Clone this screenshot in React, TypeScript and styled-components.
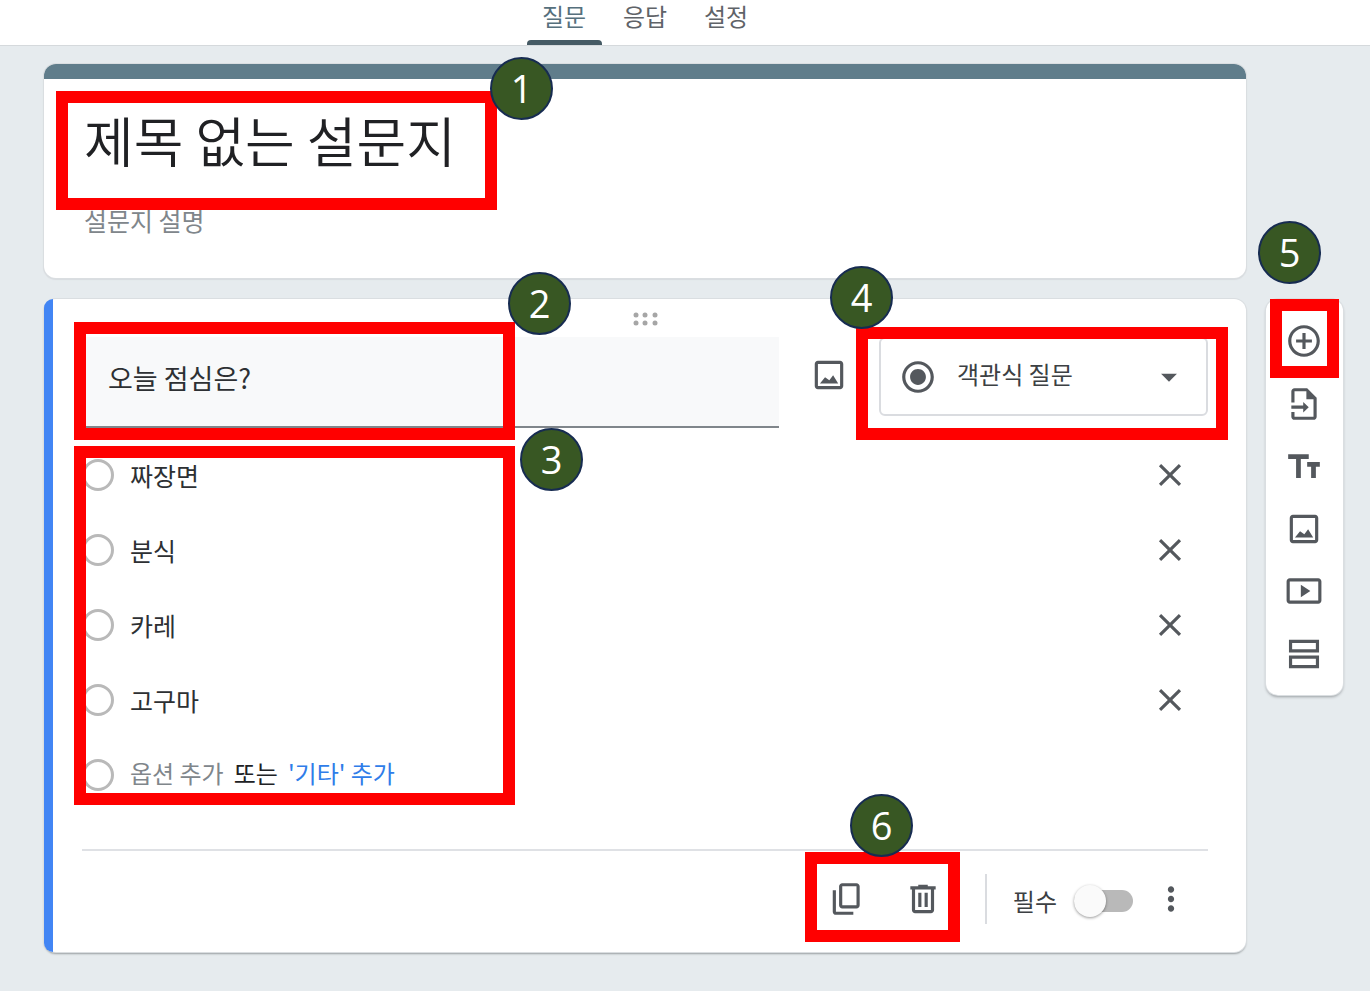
import React from "react";
import styled, { createGlobalStyle } from "styled-components";

const GlobalStyle = createGlobalStyle`
  *, *::before, *::after { box-sizing: border-box; }
  body {
    margin: 0;
    background: #e6ebee;
    color: #202124;
    font-family: "Noto Sans CJK KR", "Noto Sans", sans-serif;
    font-size: 24px;
    line-height: 32px;
  }
  button, input, select { font: inherit; color: inherit; }
`;

const Page = styled.div`
  min-height: 100vh;
  background: #e6ebee;
`;

const Header = styled.header`
  display: flex;
  justify-content: center;
  padding: 0 124px 0 44px;
  background: #fff;
  border-bottom: 1px solid #d5d9dc;
`;

const Tabs = styled.nav`
  display: flex;
  gap: 6px;
`;

const Tab = styled.button<{ $active?: boolean }>`
  display: flex;
  flex-direction: column;
  justify-content: space-between;
  width: 75px;
  height: 45px;
  padding: 0;
  border: 0;
  background: none;
  color: ${(p) => (p.$active ? "#56707d" : "#5f6368")};
  text-align: center;
  span { width: 100%; }
  &::after {
    content: "";
    width: 100%;
    height: 5px;
    border-radius: 4px 4px 0 0;
    background: ${(p) => (p.$active ? "#455a64" : "transparent")};
  }
`;

const Board = styled.main`
  display: grid;
  grid-template-columns: minmax(0, 1fr) 77px;
  column-gap: 20px;
  row-gap: 21px;
  align-items: start;
  padding: 18px 27px 36px 44px;
`;

const TitleCard = styled.section`
  position: relative;
  grid-column: 1;
  border-radius: 12px;
  background: #fff;
  box-shadow: 0 0 0 1px #dadee1, 0 1px 1px 1px #d8dcdf;
`;

const TopBar = styled.div`
  height: 15px;
  border-radius: 12px 12px 0 0;
  background: #607d8b;
`;

const TitleBody = styled.div`
  display: flex;
  flex-direction: column;
  gap: 24px;
  padding: 21px 40px 42px;
`;

const PlainInput = styled.input<{ $size: number }>`
  flex: 1;
  width: 100%;
  min-width: 0;
  padding: 0;
  border: 0;
  outline: 0;
  background: transparent;
  font-size: ${(p) => p.$size}px;
  font-weight: ${(p) => (p.$size > 40 ? 350 : 400)};
  line-height: ${(p) => (p.$size > 40 ? 80 : 32)}px;
  color: ${(p) => (p.$size > 40 ? "#202124" : "#2d3033")};
  &::placeholder { color: #80868b; opacity: 1; }
`;

const QuestionCard = styled.section`
  grid-column: 1;
  display: flex;
  border-radius: 12px;
  background: #fff;
  box-shadow: 0 0 0 1px #dadee1, 0 2px 2px 0 #9a9fa2;
`;

const Stripe = styled.div`
  width: 9px;
  border-radius: 12px 0 0 12px;
  background: #4285f4;
`;

const QuestionBody = styled.div`
  flex: 1;
  min-width: 0;
  padding: 13px 38px 0 29px;
`;

const Handle = styled.div`
  display: flex;
  justify-content: center;
  height: 25px;
  svg { display: block; }
`;

const QuestionRow = styled.div`
  position: relative;
  display: flex;
  align-items: flex-start;
`;

const QuestionField = styled.div`
  display: flex;
  align-items: center;
  flex: 1;
  height: 91px;
  padding: 0 26px 8px;
  background: #f8f9fa;
  border-bottom: 2px solid #80868b;
`;

const IconButton = styled.button<{ $w?: number; $h?: number }>`
  display: flex;
  align-items: center;
  justify-content: center;
  flex: none;
  width: ${(p) => p.$w || 76}px;
  height: ${(p) => p.$h || 76}px;
  padding: 0;
  border: 0;
  background: none;
  color: #54585d;
`;

const TypePicker = styled.label`
  display: flex;
  align-items: center;
  width: 329px;
  height: 79px;
  padding: 0 18px;
  border: 2px solid #dadce0;
  border-radius: 6px;
  color: #54585d;
`;

const TypeSelect = styled.select`
  flex: 1;
  margin-left: 20px;
  padding: 0 0 6px;
  border: 0;
  outline: 0;
  appearance: none;
  background: transparent;
  line-height: 36px;
  color: #3c4043;
`;

const Options = styled.ul`
  position: relative;
  margin: 9px 0 0;
  padding: 0;
  list-style: none;
`;

const OptionRow = styled.li`
  display: flex;
  align-items: center;
  height: 75px;
`;

const Radio = styled.input`
  flex: none;
  appearance: none;
  width: 32px;
  height: 32px;
  margin: 0 16px 0 0;
  border: 3px solid #b9b9b9;
  border-radius: 50%;
`;

const AddLine = styled.div`
  display: flex;
  gap: 10px;
  padding-bottom: 4px;
`;

const TextButton = styled.button<{ $tone: string }>`
  padding: 0;
  border: 0;
  background: none;
  color: ${(p) => p.$tone};
`;

const Footer = styled.footer`
  position: relative;
  display: flex;
  align-items: center;
  justify-content: flex-end;
  height: 103px;
  margin-top: 37px;
  padding-bottom: 6px;
  border-top: 2px solid #dfe1e5;
`;

const Separator = styled.span`
  width: 2px;
  height: 50px;
  margin: 0 26px 0 24px;
  background: #dadce0;
`;

const Required = styled.label`
  display: flex;
  align-items: center;
  gap: 17px;
  padding-top: 4px;
  color: #3c4043;
`;

const Switch = styled.input`
  appearance: none;
  display: flex;
  align-items: center;
  width: 59px;
  height: 22px;
  margin: 0;
  border-radius: 11px;
  background: #b9b9b9;
  &::before {
    content: "";
    width: 32px;
    height: 32px;
    border-radius: 50%;
    background: #fafafa;
    box-shadow: 0 1px 3px rgba(0, 0, 0, 0.4);
  }
`;

const SideBar = styled.aside`
  position: relative;
  grid-column: 2;
  display: grid;
  grid-auto-rows: 1fr;
  min-height: 396px;
  padding: 11px 0 10px;
  border-radius: 12px;
  background: #fff;
  box-shadow: 0 0 0 1px #dadee1, 0 2px 3px 0 #9a9fa2;
`;

const Frame = styled.div<{ $top: number; $left?: number; $right?: number; $w: number; $h: number }>`
  position: absolute;
  top: ${(p) => p.$top}px;
  ${(p) => (p.$right !== undefined ? `right: ${p.$right}px;` : `left: ${p.$left}px;`)}
  width: ${(p) => p.$w}px;
  height: ${(p) => p.$h}px;
  border: 12px solid #f00;
  pointer-events: none;
  z-index: 1;
`;

const Badge = styled.span<{ $x: number; $y: number }>`
  position: absolute;
  left: ${(p) => p.$x - 12}px;
  top: ${(p) => p.$y - 12}px;
  display: flex;
  align-items: center;
  justify-content: center;
  width: 63px;
  height: 63px;
  padding-bottom: 2px;
  border: 2px solid #172c51;
  border-radius: 50%;
  background: #385723;
  color: #fff;
  font-family: "Open Sans", "Noto Sans", sans-serif;
  font-size: 38px;
  z-index: 2;
`;

type MarkProps = {
  n: number;
  top: number;
  left?: number;
  right?: number;
  w: number;
  h: number;
  x: number;
  y: number;
};

const Mark = ({ n, top, left, right, w, h, x, y }: MarkProps) => (
  <Frame $top={top} $left={left} $right={right} $w={w} $h={h}>
    <Badge $x={x} $y={y}>{n}</Badge>
  </Frame>
);

const icons = {
  image:
    "M19 5v14H5V5h14m0-2H5c-1.1 0-2 .9-2 2v14c0 1.1.9 2 2 2h14c1.1 0 2-.9 2-2V5c0-1.1-.9-2-2-2zM14.6 12.2l-2.4 3.1-2.7-1.9-3.2 4h11.5z",
  radio:
    "M12 7c-2.76 0-5 2.24-5 5s2.24 5 5 5 5-2.24 5-5-2.24-5-5-5zm0-5C6.48 2 2 6.48 2 12s4.48 10 10 10 10-4.48 10-10S17.52 2 12 2zm0 18c-4.42 0-8-3.58-8-8s3.58-8 8-8 8 3.58 8 8-3.58 8-8 8z",
  arrow: "M7 10l5 5 5-5z",
  close:
    "M19 6.41L17.59 5 12 10.59 6.41 5 5 6.41 10.59 12 5 17.59 6.41 19 12 13.41 17.59 19 19 17.59 13.41 12z",
  copy:
    "M18 2H9c-1.1 0-2 .9-2 2v12c0 1.1.9 2 2 2h9c1.1 0 2-.9 2-2V4c0-1.1-.9-2-2-2zm0 14H9V4h9v12zM3 6.5h2V20h11v2H5c-1.1 0-2-.9-2-2z",
  trash:
    "M15 4V3H9v1H4v2h1v13c0 1.1.9 2 2 2h10c1.1 0 2-.9 2-2V6h1V4h-5zm2 15H7V6h10v13zM9 8h2v9H9zm4 0h2v9h-2z",
  more:
    "M12 8c1.1 0 2-.9 2-2s-.9-2-2-2-2 .9-2 2 .9 2 2 2zm0 2c-1.1 0-2 .9-2 2s.9 2 2 2 2-.9 2-2-.9-2-2-2zm0 6c-1.1 0-2 .9-2 2s.9 2 2 2 2-.9 2-2-.9-2-2-2z",
  add:
    "M13 7h-2v4H7v2h4v4h2v-4h4v-2h-4V7zm-1-5C6.48 2 2 6.48 2 12s4.48 10 10 10 10-4.48 10-10S17.52 2 12 2zm0 18c-4.41 0-8-3.59-8-8s3.59-8 8-8 8 3.59 8 8-3.59 8-8 8z",
  importDoc:
    "M14 2H6c-1.1 0-2 .9-2 2v7h2V4h7.5v5H18v11H6v-3H4v3c0 1.1.9 2 2 2h12c1.1 0 2-.9 2-2V8zM4 13h7.5v-2.3L15 14l-3.500 3.300V15H4z",
  text: "M2 4.500v3h5v12h3v-12h5v-3H2zm20 5h-8v3h2.500v7h3v-7H22v-3z",
  video:
    "M10 8v8l6-4-6-4zm11-4H3c-1.1 0-2 .9-2 2v12c0 1.1.9 2 2 2h18c1.1 0 2-.9 2-2V6c0-1.1-.9-2-2-2zm0 14H3V6h18v12z",
  section: "M2.500 3v8h19V3zm17 6h-15V5h15zM2.500 13v8h19v-8zm17 6h-15v-4h15z",
};

const Icon = ({ name, size = 38 }: { name: keyof typeof icons; size?: number }) => (
  <svg width={size} height={size} viewBox="0 0 24 24" fill="currentColor" aria-hidden="true">
    <path d={icons[name]} />
  </svg>
);

const tools: { name: keyof typeof icons; label: string }[] = [
  { name: "add", label: "질문 추가" },
  { name: "importDoc", label: "질문 가져오기" },
  { name: "text", label: "제목 및 설명 추가" },
  { name: "image", label: "이미지 추가" },
  { name: "video", label: "동영상 추가" },
  { name: "section", label: "섹션 추가" },
];

const choices = ["짜장면", "분식", "카레", "고구마"];

export default function App() {
  return (
    <Page>
      <GlobalStyle />
      <Header>
        <Tabs>
          <Tab $active><span>질문</span></Tab>
          <Tab><span>응답</span></Tab>
          <Tab><span>설정</span></Tab>
        </Tabs>
      </Header>
      <Board>
        <TitleCard>
          <TopBar />
          <TitleBody>
            <PlainInput $size={54} aria-label="설문지 제목" defaultValue="제목 없는 설문지" />
            <PlainInput $size={25} aria-label="설문지 설명" placeholder="설문지 설명" />
          </TitleBody>
          <Mark n={1} top={27} left={12} w={441} h={119} x={434} y={-34} />
        </TitleCard>

        <QuestionCard>
          <Stripe />
          <QuestionBody>
            <Handle>
              <svg width="26" height="14" viewBox="0 0 26 14" fill="#a6a6a6" aria-hidden="true">
                {[4, 13, 23].map((cx) =>
                  [3, 11].map((cy) => <circle key={`${cx}-${cy}`} cx={cx} cy={cy} r="2.5" />)
                )}
              </svg>
            </Handle>
            <QuestionRow>
              <QuestionField>
                <PlainInput $size={27} aria-label="질문" defaultValue="오늘 점심은?" />
              </QuestionField>
              <IconButton $w={100} aria-label="이미지 추가">
                <Icon name="image" />
              </IconButton>
              <TypePicker>
                <Icon name="radio" />
                <TypeSelect aria-label="질문 유형" defaultValue="choice">
                  <option value="choice">객관식 질문</option>
                </TypeSelect>
                <Icon name="arrow" />
              </TypePicker>
              <Mark n={2} top={-15} left={-8} w={441} h={118} x={434} y={-50} />
              <Mark n={4} top={-10} right={-20} w={372} h={113} x={-26} y={-61} />
            </QuestionRow>
            <Options>
              {choices.map((c) => (
                <OptionRow key={c}>
                  <Radio type="radio" name="lunch" aria-label={c} />
                  <PlainInput $size={25} aria-label="옵션" defaultValue={c} />
                  <IconButton aria-label="옵션 삭제">
                    <Icon name="close" />
                  </IconButton>
                </OptionRow>
              ))}
              <OptionRow>
                <Radio type="radio" name="lunch" aria-label="새 옵션" />
                <AddLine>
                  <TextButton $tone="#80868b">옵션 추가</TextButton>
                  <span>또는</span>
                  <TextButton $tone="#2f7de9">'기타' 추가</TextButton>
                </AddLine>
              </OptionRow>
              <Mark n={3} top={9} left={-8} w={441} h={359} x={446} y={-18} />
            </Options>
            <Footer>
              <IconButton aria-label="복사">
                <Icon name="copy" />
              </IconButton>
              <IconButton aria-label="삭제">
                <Icon name="trash" />
              </IconButton>
              <Separator />
              <Required>
                필수
                <Switch type="checkbox" role="switch" />
              </Required>
              <IconButton $w={75} aria-label="더보기">
                <Icon name="more" />
              </IconButton>
              <Mark n={6} top={1} right={248} w={155} h={90} x={45} y={-58} />
            </Footer>
          </QuestionBody>
        </QuestionCard>

        <SideBar>
          {tools.map((t) => (
            <IconButton key={t.name} $w={76} $h={62} aria-label={t.label}>
              <Icon name={t.name} />
            </IconButton>
          ))}
          <Mark n={5} top={0} left={4} w={69} h={79} x={-12} y={-78} />
        </SideBar>
      </Board>
    </Page>
  );
}
